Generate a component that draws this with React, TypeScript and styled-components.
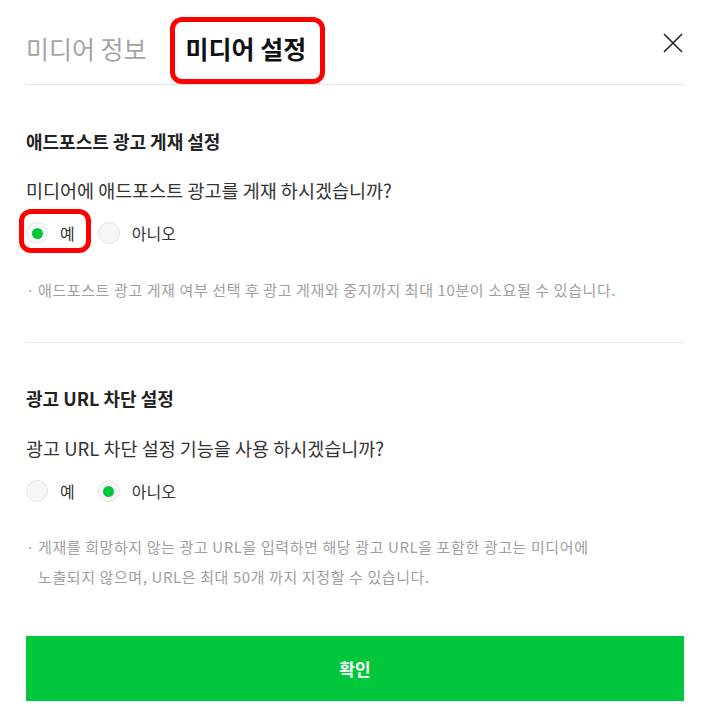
import React from 'react';
import styled, { createGlobalStyle } from 'styled-components';

const GlobalStyle = createGlobalStyle`
  body {
    margin: 0;
    background: #fff;
    font-family: "Noto Sans CJK KR", "Noto Sans", sans-serif;
  }
`;

const SWrapper = styled.div`
  width: 658px;
  margin-left: 26px;
  color: #222;
`;

const SHeader = styled.div`
  display: flex;
  height: 85px;
  box-sizing: border-box;
  border-bottom: 1px solid #e4e4e4;
`;

const STabList = styled.div`
  display: flex;
  align-items: flex-end;
  gap: 39px;
`;

const STab = styled.div<{ $active?: boolean }>`
  position: relative;
  font-size: 25px;
  line-height: 30px;
  padding-bottom: 19px;
  font-weight: ${({ $active }) => ($active ? 700 : 400)};
  color: ${({ $active }) => ($active ? '#111' : '#a5a5a5')};
  border-bottom: 2px solid ${({ $active }) => ($active ? '#00c73c' : 'transparent')};
`;

const SHighlight = styled.span<{ $inset: string }>`
  position: absolute;
  inset: ${({ $inset }) => $inset};
  border: 5px solid #ff0000;
  border-radius: 12px;
  pointer-events: none;
`;

const SCloseButton = styled.button`
  margin: 33px 1px 0 auto;
  width: 20px;
  height: 20px;
  padding: 0;
  border: 0;
  background: none;
  cursor: pointer;
`;

const SSection = styled.section<{ $top: number; $bottom: number; $divider?: boolean }>`
  padding: ${({ $top }) => $top}px 0 ${({ $bottom }) => $bottom}px;
  border-bottom: ${({ $divider }) => ($divider ? '1px solid #ebebeb' : 'none')};
`;

const STitle = styled.h3`
  margin: 0;
  font-size: 18px;
  line-height: 24px;
  font-weight: 700;
  color: #222;
`;

const SQuestion = styled.p<{ $gap: number }>`
  margin: ${({ $gap }) => $gap}px 0 0;
  font-size: 18.5px;
  line-height: 26px;
  color: #333;
`;

const SRadioGroup = styled.div`
  display: flex;
  align-items: center;
  gap: 23px;
  margin-top: 18px;
  height: 24px;
`;

const SRadioLabel = styled.label`
  position: relative;
  display: flex;
  align-items: center;
  gap: 12px;
  font-size: 16px;
  line-height: 22px;
  color: #333;
  cursor: pointer;
`;

const SRadioCircle = styled.span<{ $checked: boolean }>`
  display: flex;
  align-items: center;
  justify-content: center;
  width: 22px;
  height: 22px;
  box-sizing: border-box;
  border-radius: 50%;
  border: 1px solid #e6e6e6;
  background: #f7f7f7;

  &::after {
    content: '';
    width: 11px;
    height: 11px;
    border-radius: 50%;
    background: #00c73c;
    display: ${({ $checked }) => ($checked ? 'block' : 'none')};
  }
`;

const SNote = styled.div<{ $gap: number }>`
  display: flex;
  margin-top: ${({ $gap }) => $gap}px;
  font-size: 15px;
  line-height: 30px;
  color: #a0a0a0;
  letter-spacing: 0.6px;
`;

const SBullet = styled.span`
  flex: none;
  width: 12px;
`;

const SConfirmButton = styled.button`
  display: block;
  width: 100%;
  height: 65px;
  margin-top: 44px;
  border: 0;
  background: #00c73c;
  color: #fff;
  font-family: inherit;
  font-size: 17px;
  font-weight: 700;
  cursor: pointer;
`;

interface RadioProps {
  label: string;
  checked: boolean;
  highlight?: boolean;
}

const Radio = ({ label, checked, highlight }: RadioProps) => (
  <SRadioLabel>
    <SRadioCircle $checked={checked} />
    {label}
    {highlight && <SHighlight $inset="-13px -16px -9px -7px" />}
  </SRadioLabel>
);

export default function App() {
  return (
    <SWrapper>
      <GlobalStyle />
      <SHeader>
        <STabList>
          <STab>미디어 정보</STab>
          <STab $active>
            미디어 설정
            <SHighlight $inset="-16px -19px -2px -16px" />
          </STab>
        </STabList>
        <SCloseButton aria-label="닫기">
          <svg width="20" height="20" viewBox="0 0 20 20">
            <path d="M1 1L19 19M19 1L1 19" stroke="#222" strokeWidth="1.6" fill="none" />
          </svg>
        </SCloseButton>
      </SHeader>

      <SSection $top={44} $bottom={37} $divider>
        <STitle>애드포스트 광고 게재 설정</STitle>
        <SQuestion $gap={24}>미디어에 애드포스트 광고를 게재 하시겠습니까?</SQuestion>
        <SRadioGroup>
          <Radio label="예" checked highlight />
          <Radio label="아니오" checked={false} />
        </SRadioGroup>
        <SNote $gap={30}>
          <SBullet>·</SBullet>
          <span>애드포스트 광고 게재 여부 선택 후 광고 게재와 중지까지 최대 10분이 소요될 수 있습니다.</span>
        </SNote>
      </SSection>

      <SSection $top={43} $bottom={0}>
        <STitle>광고 URL 차단 설정</STitle>
        <SQuestion $gap={25}>광고 URL 차단 설정 기능을 사용 하시겠습니까?</SQuestion>
        <SRadioGroup>
          <Radio label="예" checked={false} />
          <Radio label="아니오" checked />
        </SRadioGroup>
        <SNote $gap={29}>
          <SBullet>·</SBullet>
          <span>
            게재를 희망하지 않는 광고 URL을 입력하면 해당 광고 URL을 포함한 광고는 미디어에
            <br />
            노출되지 않으며, URL은 최대 50개 까지 지정할 수 있습니다.
          </span>
        </SNote>
        <SConfirmButton>확인</SConfirmButton>
      </SSection>
    </SWrapper>
  );
}
